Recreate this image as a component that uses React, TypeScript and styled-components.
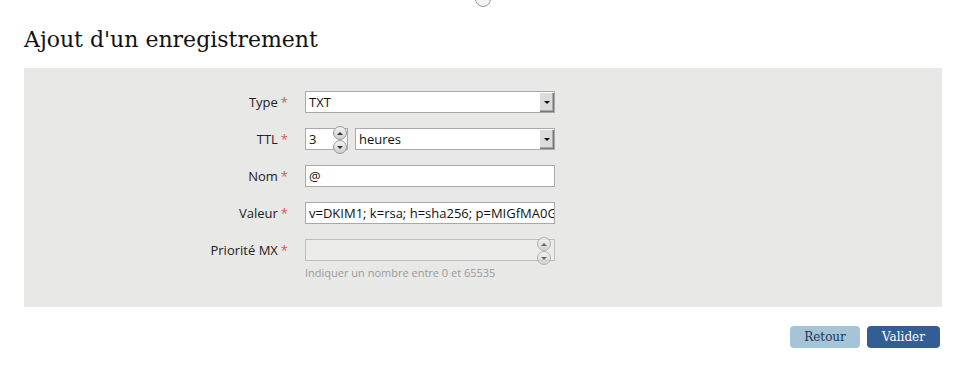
import styled, { createGlobalStyle } from "styled-components";

const GlobalStyle = createGlobalStyle`
  body {
    margin: 0;
    background: #ffffff;
    font-family: "Open Sans", "Noto Sans", sans-serif;
    color: #222;
  }
`;

const Page = styled.div`
  width: 964px;
  height: 391px;
  padding: 0 22px 0 24px;
  box-sizing: border-box;
  position: relative;
`;

const TopIcon = styled.div`
  position: absolute;
  left: 475px;
  top: -9px;
  width: 14px;
  height: 14px;
  border: 1px solid #999;
  border-radius: 50%;
  background: #f4f4f4;
`;

const Title = styled.h1`
  margin: 0;
  padding-top: 27px;
  height: 68px;
  box-sizing: border-box;
  font-family: "DejaVu Serif", serif;
  font-weight: normal;
  font-size: 22px;
  line-height: 26px;
  color: #111;
`;

const Panel = styled.div`
  background: #e8e8e6;
  height: 239px;
  padding-top: 23px;
  box-sizing: border-box;
  display: flex;
  flex-direction: column;
  gap: 15px;
`;

const Row = styled.div`
  display: grid;
  grid-template-columns: 264px 250px;
  column-gap: 17px;
  align-items: start;
`;

const Label = styled.label`
  text-align: right;
  font-size: 13px;
  line-height: 22px;
  color: #222;
`;

const Star = styled.span`
  color: #e8524f;
  margin-left: 3px;
`;

const Field = styled.div`
  display: flex;
  flex-direction: column;
  gap: 5px;
`;

const Controls = styled.div`
  display: flex;
  gap: 7px;
`;

const Box = styled.div<{ $disabled?: boolean; $width?: number; $open?: boolean }>`
  position: relative;
  height: 22px;
  width: ${(p) => (p.$width ? `${p.$width}px` : "100%")};
  box-sizing: border-box;
  border: 1px solid ${(p) => (p.$disabled ? "#bdbdbd" : "#a9a9a9")};
  background: ${(p) => (p.$disabled ? "#ececea" : "#fff")};
  display: flex;
  align-items: center;
  padding-left: 3px;
  font-size: 13px;
  color: #111;
  overflow: ${(p) => (p.$open ? "visible" : "hidden")};
  white-space: nowrap;
`;

const ArrowBox = styled.div`
  position: absolute;
  right: 0;
  top: 0;
  bottom: 0;
  width: 14px;
  background: #dcdcdc;
  border-left: 1px solid #fff;
  border-top: 1px solid #fff;
  box-shadow: inset -1px -1px 0 #777, inset -2px -2px 0 #aaa;
  display: flex;
  align-items: center;
  justify-content: center;
  &::after {
    content: "";
    border-left: 3px solid transparent;
    border-right: 3px solid transparent;
    border-top: 3px solid #111;
    margin-right: 1px;
  }
`;

const Spinner = styled.div<{ $faded?: boolean }>`
  position: absolute;
  right: ${(p) => (p.$faded ? 3 : 0)}px;
  top: -3px;
  display: flex;
  flex-direction: column;
  opacity: ${(p) => (p.$faded ? 0.7 : 1)};
`;

const SpinButton = styled.div<{ $down?: boolean }>`
  width: 12px;
  height: 12px;
  border: 1px solid #9a9a9a;
  border-radius: 50%;
  background: linear-gradient(#f4f4f4, #cdcdcd);
  display: flex;
  align-items: center;
  justify-content: center;
  &::after {
    content: "";
    border-left: 3px solid transparent;
    border-right: 3px solid transparent;
    ${(p) =>
      p.$down ? "border-top: 3px solid #333;" : "border-bottom: 3px solid #333;"}
  }
`;

const Hint = styled.div`
  font-size: 11px;
  color: #9a9a9a;
  line-height: 13px;
`;

const Actions = styled.div`
  display: flex;
  justify-content: flex-end;
  gap: 7px;
  padding-top: 19px;
  padding-right: 2px;
`;

const Button = styled.button<{ $primary?: boolean }>`
  font-family: "DejaVu Serif", serif;
  font-size: 12px;
  height: 22px;
  width: ${(p) => (p.$primary ? 73 : 70)}px;
  padding: 0;
  border: 0;
  border-radius: 4px;
  background: ${(p) => (p.$primary ? "#325e93" : "#a5c4d8")};
  color: ${(p) => (p.$primary ? "#fff" : "#1d3553")};
  cursor: pointer;
`;

export default function App() {
  return (
    <>
      <GlobalStyle />
      <Page>
        <TopIcon />
        <Title>Ajout d'un enregistrement</Title>
        <Panel>
          <Row>
            <Label>
              Type<Star>*</Star>
            </Label>
            <Field>
              <Box>
                TXT
                <ArrowBox />
              </Box>
            </Field>
          </Row>
          <Row>
            <Label>
              TTL<Star>*</Star>
            </Label>
            <Field>
              <Controls>
                <Box $width={43} $open>
                  3
                  <Spinner>
                    <SpinButton />
                    <SpinButton $down />
                  </Spinner>
                </Box>
                <Box $width={200}>
                  heures
                  <ArrowBox />
                </Box>
              </Controls>
            </Field>
          </Row>
          <Row>
            <Label>
              Nom<Star>*</Star>
            </Label>
            <Field>
              <Box>@</Box>
            </Field>
          </Row>
          <Row>
            <Label>
              Valeur<Star>*</Star>
            </Label>
            <Field>
              <Box>v=DKIM1; k=rsa; h=sha256; p=MIGfMA0GCSqGSIb3DQEBAQUAA4GN</Box>
            </Field>
          </Row>
          <Row>
            <Label>
              Priorité MX<Star>*</Star>
            </Label>
            <Field>
              <Box $disabled $open>
                <Spinner $faded>
                  <SpinButton />
                  <SpinButton $down />
                </Spinner>
              </Box>
              <Hint>Indiquer un nombre entre 0 et 65535</Hint>
            </Field>
          </Row>
        </Panel>
        <Actions>
          <Button>Retour</Button>
          <Button $primary>Valider</Button>
        </Actions>
      </Page>
    </>
  );
}
